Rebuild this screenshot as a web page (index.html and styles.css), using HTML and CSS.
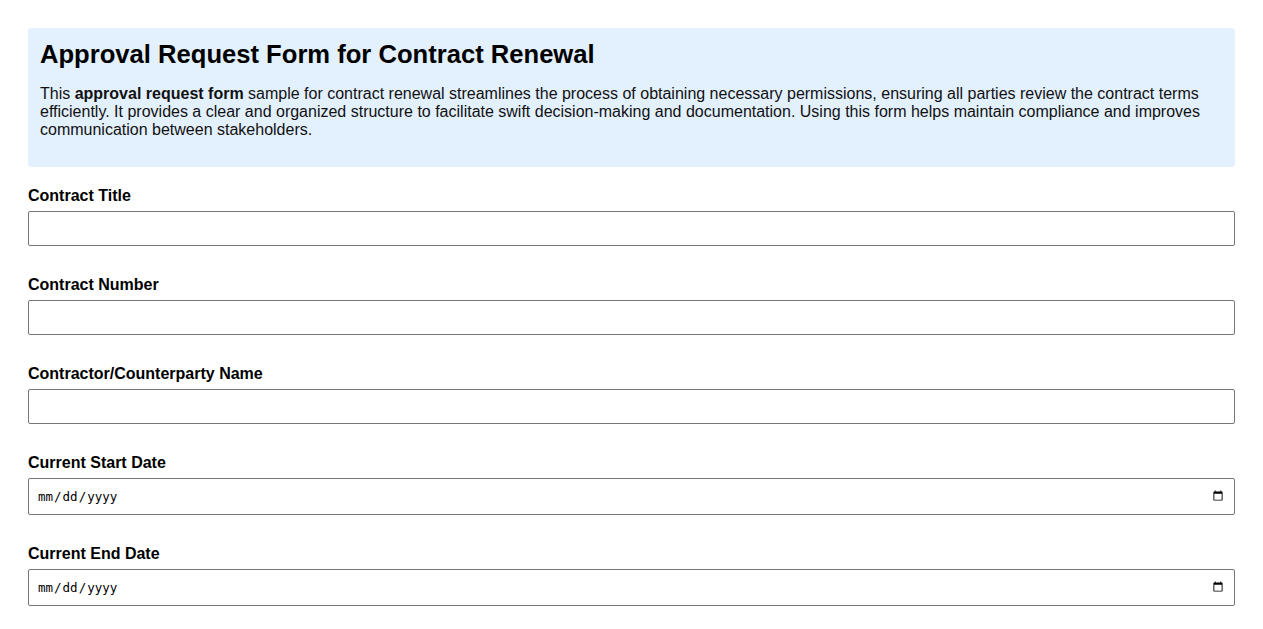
FILE: index.html
```html
<!DOCTYPE html>
<html lang="en">
<head>
<meta charset="utf-8">
<title>Approval Request Form for Contract Renewal</title>
<link rel="stylesheet" href="styles.css">
</head>
<body>
<div class="container">
  <div class="intro">
    <h1 class="intro-title">Approval Request Form for Contract Renewal</h1>
    <p class="intro-text">This <strong>approval request form</strong> sample for contract renewal streamlines the process of obtaining necessary permissions, ensuring all parties review the contract terms efficiently. It provides a clear and organized structure to facilitate swift decision-making and documentation. Using this form helps maintain compliance and improves communication between stakeholders.</p>
  </div>
  <form class="form">
    <div class="field">
      <label class="field-label" for="title">Contract Title</label>
      <input class="field-input" type="text" id="title">
    </div>
    <div class="field">
      <label class="field-label" for="number">Contract Number</label>
      <input class="field-input" type="text" id="number">
    </div>
    <div class="field">
      <label class="field-label" for="party">Contractor/Counterparty Name</label>
      <input class="field-input" type="text" id="party">
    </div>
    <div class="field">
      <label class="field-label" for="start">Current Start Date</label>
      <input class="field-input" type="date" id="start">
    </div>
    <div class="field">
      <label class="field-label" for="end">Current End Date</label>
      <input class="field-input" type="date" id="end">
    </div>
  </form>
</div>
</body>
</html>
```

FILE: styles.css
```css
html, body {
  margin: 0;
  padding: 0;
  background: #ffffff;
}
body {
  font-family: "Liberation Sans", Arial, sans-serif;
  font-size: 16px;
  color: #000;
  padding: 28px;
}
.container {
  display: flex;
  flex-direction: column;
}
.intro {
  background: #e3f0fe;
  border-radius: 4px;
  padding: 12px;
  margin-bottom: 20px;
}
.intro-title {
  font-size: 25.6px;
  font-weight: bold;
  margin: 0 0 16px 0;
}
.intro-text {
  margin: 0 0 16px 0;
  color: #111;
}
.form {
  display: flex;
  flex-direction: column;
  gap: 30px;
}
.field {
  display: flex;
  flex-direction: column;
}
.field-label {
  font-weight: bold;
  margin-bottom: 6px;
}
.field-input {
  box-sizing: border-box;
  width: 100%;
  padding: 9px 8px;
  border: 1px solid #767676;
  border-radius: 2px;
  margin: 0;
  font-size: 12.5px;
  line-height: 15px;
}
```
